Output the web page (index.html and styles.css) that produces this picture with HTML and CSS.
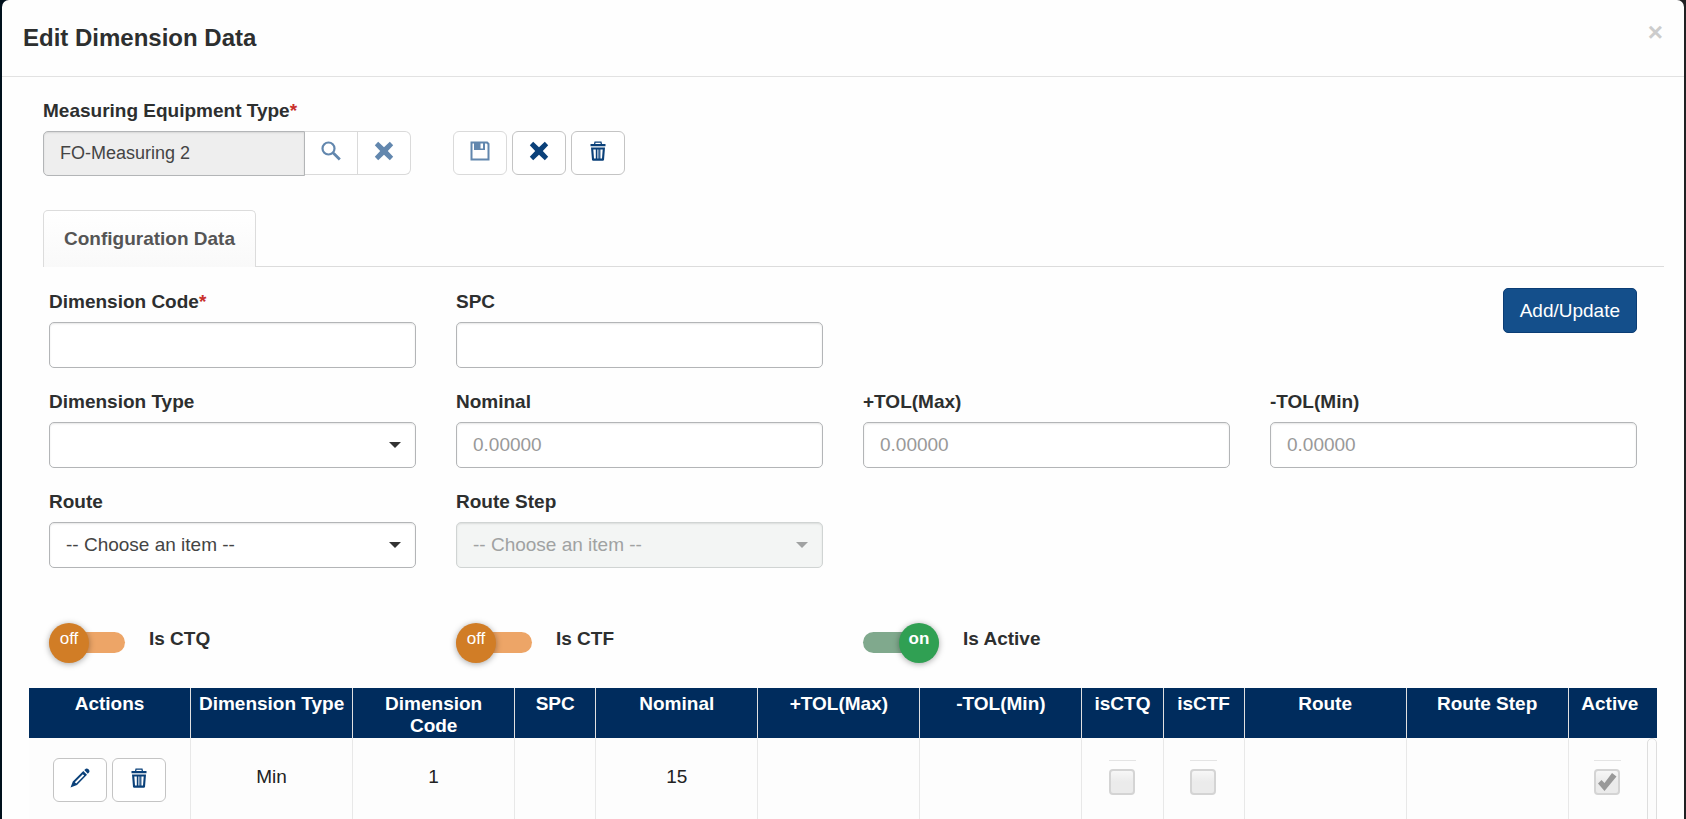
FILE: index.html
```html
<!DOCTYPE html>
<html lang="en">
<head>
<meta charset="utf-8">
<title>Edit Dimension Data</title>
<link rel="stylesheet" href="styles.css">
</head>
<body>
<svg class="symbols" aria-hidden="true">
  <symbol id="i-search" viewBox="0 0 20 20"><circle cx="7.5" cy="7.5" r="6" fill="none" stroke="currentColor" stroke-width="2.200"/><path d="M11 12.800l1.800-1.800 1 .5 6 6-2 2-6-6z" fill="currentColor"/></symbol>
  <symbol id="i-x" viewBox="0 0 20 20"><path d="M4.200 .8L10 6.200 15.800 .8l3.400 3.400L13.800 10l5.400 5.800-3.400 3.400L10 13.800l-5.800 5.400L.8 15.800 6.200 10 .8 4.200z" fill="currentColor"/></symbol>
  <symbol id="i-save" viewBox="0 0 20 20"><path fill="currentColor" fill-rule="evenodd" d="M.5 .5h17l2 2v17H.5zM2.500 2.500v15h15v-14l-1-1H15V9H4V2.500zM10.500 2.500V7.500h2.500v-5z"/></symbol>
  <symbol id="i-trash" viewBox="0 0 20 20"><path fill="currentColor" fill-rule="evenodd" d="M6.500 .5h7L14 3h3.500v2.200h-15V3H6zM7.500 1.800L7.300 3h5.400l-.2-1.200zM3 6.500h14L16 19l-.8.700H4.800L4 19zM5.300 8.500l.7 9h1.800v-9zM9 8.500v9h.600v-9zM10.600 8.500v9h.6v-9zM12.400 8.500v9H14l.7-9z"/></symbol>
  <symbol id="i-pencil" viewBox="0 0 20 20"><path fill="currentColor" fill-rule="evenodd" d="M14.300 2L15.800.700q1.200-.8 2.700.6 1.500 1.600.7 2.900L17.800 5.700zM13.300 3l3.700 3.700L7 17 .5 19.500 2.800 13.500zM12.800 6.200l-8 8 1.400 1.400 8-8z"/></symbol>
</svg>
<main class="modal">
  <header class="modal-header">
    <h1>Edit Dimension Data</h1>
    <button class="close" type="button" aria-label="Close">×</button>
  </header>
  <section class="equipment">
    <label class="label" for="equipment">Measuring Equipment Type<span class="required">*</span></label>
    <div class="equipment-row">
      <div class="input-group">
        <input class="control" id="equipment" type="text" value="FO-Measuring 2" readonly>
        <button class="icon-button muted" type="button" aria-label="Search"><svg><use href="#i-search"/></svg></button>
        <button class="icon-button muted" type="button" aria-label="Clear"><svg><use href="#i-x"/></svg></button>
      </div>
      <div class="toolbar">
        <button class="icon-button muted" type="button" aria-label="Save"><svg><use href="#i-save"/></svg></button>
        <button class="icon-button" type="button" aria-label="Cancel"><svg><use href="#i-x"/></svg></button>
        <button class="icon-button" type="button" aria-label="Delete"><svg><use href="#i-trash"/></svg></button>
      </div>
    </div>
  </section>
  <nav class="tabs"><a class="tab" href="#configuration">Configuration Data</a></nav>
  <form class="fields" id="configuration">
    <div class="field"><label class="label" for="code">Dimension Code<span class="required">*</span></label><input class="control" id="code" type="text"></div>
    <div class="field"><label class="label" for="spc">SPC</label><input class="control" id="spc" type="text"></div>
    <button class="primary" type="button">Add/Update</button>
    <div class="field first"><label class="label" for="type">Dimension Type</label><div class="select"><select class="control" id="type"><option></option></select></div></div>
    <div class="field"><label class="label" for="nominal">Nominal</label><input class="control" id="nominal" type="text" placeholder="0.00000"></div>
    <div class="field"><label class="label" for="max">+TOL(Max)</label><input class="control" id="max" type="text" placeholder="0.00000"></div>
    <div class="field"><label class="label" for="min">-TOL(Min)</label><input class="control" id="min" type="text" placeholder="0.00000"></div>
    <div class="field"><label class="label" for="route">Route</label><div class="select"><select class="control" id="route"><option>-- Choose an item --</option></select></div></div>
    <div class="field"><label class="label" for="step">Route Step</label><div class="select disabled"><select class="control" id="step" disabled><option>-- Choose an item --</option></select></div></div>
  </form>
  <div class="toggles">
    <label class="toggle"><input type="checkbox"><span class="track"><span class="knob">off</span></span><span class="toggle-text">Is CTQ</span></label>
    <label class="toggle"><input type="checkbox"><span class="track"><span class="knob">off</span></span><span class="toggle-text">Is CTF</span></label>
    <label class="toggle"><input type="checkbox" checked><span class="track"><span class="knob">on</span></span><span class="toggle-text">Is Active</span></label>
  </div>
  <div class="grid">
    <table>
      <colgroup><col class="wide"><col class="wide"><col class="wide"><col class="narrow"><col class="wide"><col class="wide"><col class="wide"><col class="narrow"><col class="narrow"><col class="wide"><col class="wide"><col></colgroup>
      <thead><tr><th>Actions</th><th>Dimension Type</th><th>Dimension Code</th><th>SPC</th><th>Nominal</th><th>+TOL(Max)</th><th>-TOL(Min)</th><th>isCTQ</th><th>isCTF</th><th>Route</th><th>Route Step</th><th>Active</th></tr></thead>
      <tbody><tr>
        <td><div class="actions"><button class="icon-button" type="button" aria-label="Edit"><svg><use href="#i-pencil"/></svg></button><button class="icon-button" type="button" aria-label="Delete"><svg><use href="#i-trash"/></svg></button></div></td>
        <td>Min</td><td>1</td><td></td><td>15</td><td></td><td></td>
        <td><span class="check"><input type="checkbox" aria-label="isCTQ" disabled></span></td>
        <td><span class="check"><input type="checkbox" aria-label="isCTF" disabled></span></td>
        <td></td><td></td>
        <td><span class="check"><input type="checkbox" aria-label="Active" checked disabled><svg viewBox="0 0 26 26"><path d="M4 14.500l3.500-3.500 3 3L18 4l4.500 3.500L10.500 22z" fill="#999"/></svg></span></td>
      </tr></tbody>
    </table>
    <div class="scroll-track"></div>
  </div>
</main>
</body>
</html>
```
FILE: styles.css
```css
* { box-sizing: border-box; }
body {
  margin: 0;
  padding: 0 2px;
  background: linear-gradient(90deg, #00101c 50%, #202022 50%);
  color: #2d2f2f;
  font: 19px/22px "Liberation Sans", Arial, sans-serif;
}
button, input, select { font: inherit; color: inherit; margin: 0; }
.symbols { display: none; }
.modal {
  display: flex;
  flex-direction: column;
  height: 100vh;
  overflow: hidden;
  background: #fefefe;
  border-radius: 7px 7px 0 0;
}
.modal-header {
  display: flex;
  justify-content: space-between;
  align-items: flex-start;
  padding: 24px 21px;
  border-bottom: 1px solid #e2e2e2;
}
h1 { margin: 0; font-size: 24px; line-height: 28px; }
.close {
  padding: 0;
  border: 0;
  background: none;
  color: #ccc;
  font-size: 26px;
  font-weight: bold;
  line-height: 16px;
}
.label { display: block; margin-bottom: 9px; font-weight: bold; }
.required { color: #c9302c; }
.control {
  display: block;
  width: 100%;
  height: 46px;
  padding: 0 16px;
  border: 1px solid #b3b5b7;
  border-radius: 5px;
  background: #fff;
  box-shadow: inset 0 1px 2px rgba(0, 0, 0, .1);
  outline: 0;
  color: #444;
}
.control::placeholder { color: #999; opacity: 1; }
.equipment { padding: 23px 20px 0 41px; }
.equipment-row { display: flex; gap: 42px; }
.input-group { display: flex; align-items: flex-start; }
.input-group .control {
  width: 262px;
  height: 45px;
  background: #eee;
  border-radius: 5px 0 0 5px;
  font-size: 18px;
}
.input-group .icon-button { width: 53px; border-left: 0; border-radius: 0; }
.input-group .icon-button:last-child { border-radius: 0 6px 6px 0; }
.toolbar { display: flex; gap: 5px; }
.icon-button {
  display: flex;
  justify-content: center;
  width: 54px;
  height: 44px;
  padding: 9px 0;
  border: 1px solid #c4c4c4;
  border-radius: 6px;
  background: #fff;
  color: #0a4079;
}
.icon-button.muted { border-color: #dadada; color: #6287ae; }
.icon-button svg { width: 20px; height: 20px; }
.tabs {
  display: flex;
  margin: 34px 20px 0 41px;
  border-bottom: 1px solid #dcdcdc;
}
.tab {
  margin-bottom: -1px;
  padding: 17px 20px;
  border: 1px solid #dcdcdc;
  border-bottom: 0;
  border-radius: 5px 5px 0 0;
  background: linear-gradient(#fff, #f9f9f9);
  color: #555;
  font-weight: bold;
  text-decoration: none;
}
.fields, .toggles {
  display: grid;
  grid-template-columns: repeat(4, 1fr);
  gap: 20px 40px;
  padding: 21px 47px 0;
}
.field { padding-top: 3px; }
.field.first { grid-column: 1; }
.primary {
  grid-column: 4;
  justify-self: end;
  align-self: start;
  height: 45px;
  padding: 0 16px;
  border: 1px solid #0b3d75;
  border-radius: 5px;
  background: #144f8b;
  color: #fff;
}
.select { position: relative; }
.select::after {
  content: "";
  position: absolute;
  top: 20px;
  right: 15px;
  border: 6px solid transparent;
  border-top-color: #333;
  border-bottom: 0;
  pointer-events: none;
}
.select .control { appearance: none; opacity: 1; }
.select.disabled .control { background: #f3f5f4; border-color: #d0d4d3; color: #a0a2a2; }
.select.disabled::after { border-top-color: #a0a2a2; }
.toggles { padding-top: 54px; }
.toggle { display: flex; align-items: flex-start; font-weight: bold; }
.toggle input { position: absolute; opacity: 0; }
.track {
  display: flex;
  align-items: center;
  width: 76px;
  height: 21px;
  margin: 10px 24px 9px 0;
  border-radius: 11px;
  background: #eda567;
}
.knob {
  width: 40px;
  height: 40px;
  border-radius: 50%;
  background: #d17d26;
  box-shadow: 0 1px 6px rgba(0, 0, 0, .35);
  color: #fff;
  font-size: 17px;
  font-weight: normal;
  line-height: 32px;
  text-align: center;
}
.toggle input:checked + .track { justify-content: flex-end; background: #80a98d; }
.toggle input:checked + .track .knob { background: #30a053; font-weight: bold; }
.toggle-text { padding-top: 6px; }
.grid {
  position: relative;
  flex: 1;
  margin: 26px 27px 0;
  overflow: hidden;
  background: #fdfdfd;
}
table { width: 100%; border-collapse: separate; border-spacing: 0; table-layout: fixed; }
.wide { width: 9.955%; }
.narrow { width: 4.980%; }
th {
  padding: 5px 6px 0;
  height: 50px;
  background: #002c5d;
  border-right: 1px solid #e0e0e0;
  color: #fff;
  vertical-align: top;
}
td {
  padding: 20px 0;
  border-right: 1px solid #e8e8e8;
  color: #222;
  text-align: center;
  vertical-align: top;
}
td:not(:first-child) { padding-top: 28px; }
th:last-child { border: 0; padding-right: 12px; }
td:last-child { border: 0; padding-right: 10px; }
tbody td:nth-child(n+8) { padding-top: 22px; }
.actions { display: flex; justify-content: center; gap: 5px; }
.check {
  display: inline-grid;
  width: 27px;
  height: 46px;
  padding-top: 8px;
  border-top: 1px solid #e4e4e4;
  vertical-align: top;
}
.check input, .check svg { grid-area: 1 / 1; width: 26px; height: 26px; }
.check input {
  appearance: none;
  border: 2px solid #d4d4d4;
  border-radius: 4px;
  background: linear-gradient(#f7f7f7, #ebebeb 50%);
}
.scroll-track {
  position: absolute;
  top: 50px;
  right: 0;
  bottom: -10px;
  width: 10px;
  border: 1px solid #dedede;
  border-radius: 5px;
  background: #fcfcfc;
}
```
